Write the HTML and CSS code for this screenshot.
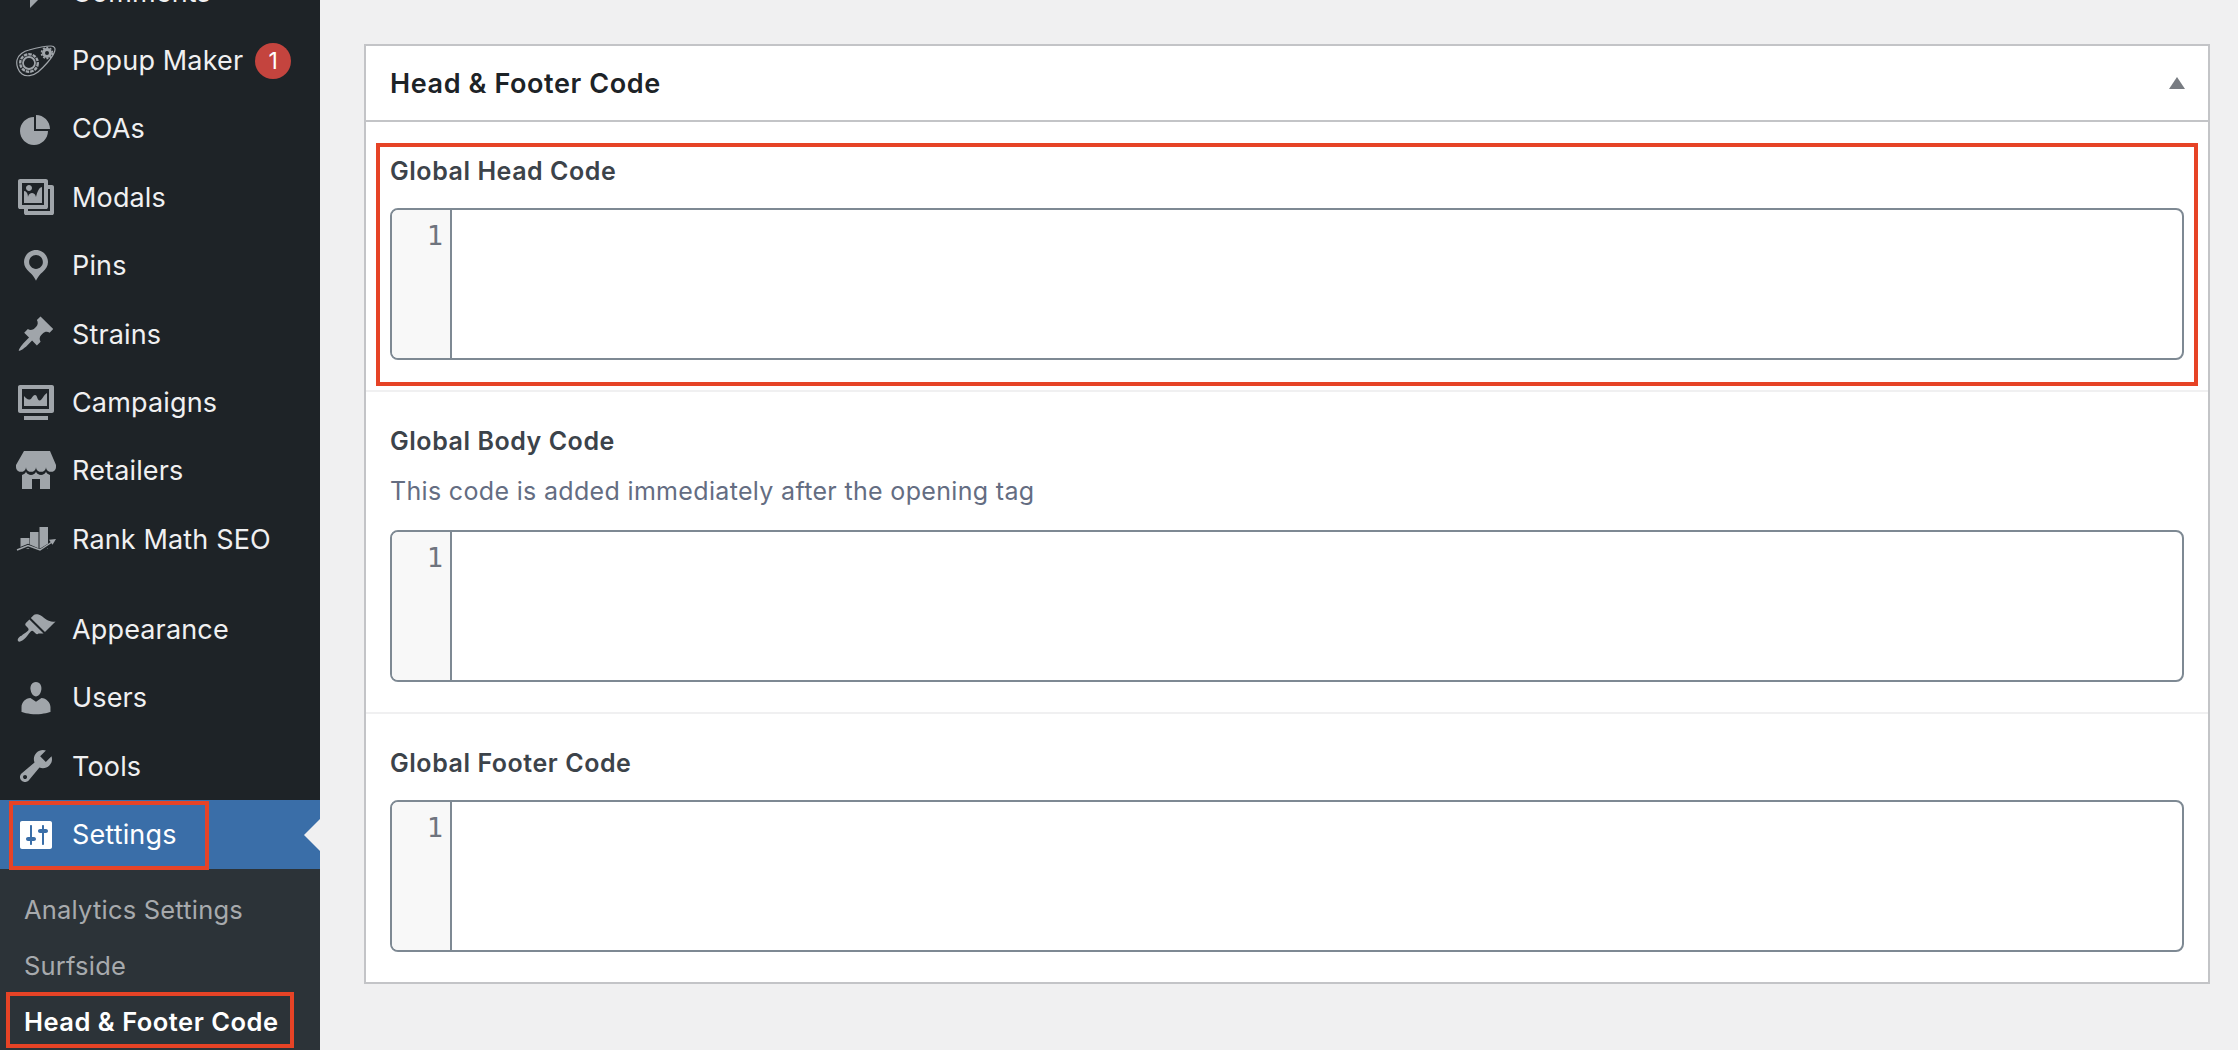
FILE: index.html
```html
<!DOCTYPE html>
<html lang="en">
<head>
<meta charset="utf-8">
<title>Head &amp; Footer Code</title>
<link rel="stylesheet" href="styles.css">
</head>
<body>
<div class="layout">
  <nav class="sidebar">
    <ul class="menu">
      <li class="item"><svg class="icon" viewBox="0 0 20 20"><path d="M5 2h9c1.1 0 2 .9 2 2v7c0 1.1-.9 2-2 2h-2l-5 5v-5H5c-1.1 0-2-.9-2-2V4c0-1.1.9-2 2-2z"/></svg><span>Comments</span></li>
      <li class="item"><svg class="icon" viewBox="0 0 40 40"><g fill="none" stroke="#a0a5aa"><path stroke-width="1.200" d="M1 19C2 14 8 10 13 9C20 7 30 5 35 5C39 5 40 8 38 12C36 17 28 26 22 31C17 35 10 36 6 33C2 30 0 24 1 19Z"/><circle cx="13" cy="22" r="6" stroke-width="1.800"/><circle cx="13" cy="22" r="8.800" stroke-width="2.400" stroke-dasharray="3.500 1"/></g><circle cx="31" cy="12" r="3.500" fill="none" stroke="#a0a5aa" stroke-width="3"/><circle cx="31" cy="12" r="5.500" fill="none" stroke="#a0a5aa" stroke-width="1.600" stroke-dasharray="2 1.500"/></svg><span>Popup Maker</span><span class="badge">1</span></li>
      <li class="item"><svg class="icon" viewBox="0 0 20 20"><path d="M10 10V3c3.870 0 7 3.130 7 7h-7zM9 4v7h7c0 3.870-3.130 7-7 7s-7-3.130-7-7 3.130-7 7-7z"/></svg><span>COAs</span></li>
      <li class="item"><svg class="icon" viewBox="0 0 20 20"><path d="M16 4h1.960c.57 0 1.040.47 1.040 1.040v12.920c0 .57-.47 1.040-1.040 1.040H5.040C4.470 19 4 18.530 4 17.960V16H2.040C1.470 16 1 15.530 1 14.960V2.040C1 1.470 1.470 1 2.040 1h12.920c.57 0 1.040.47 1.040 1.040V4zM3 14h11V3H3v11zm5-8.500C8 4.670 7.330 4 6.500 4S5 4.670 5 5.500 5.670 7 6.500 7 8 6.330 8 5.500zm2 4.500s1-5 3-5v8H4V7c2 0 2 3 2 3s.33-2 2-2 2 2 2 2zm7 7V6h-1v8.960c0 .57-.47 1.040-1.040 1.040H6v1h11z"/></svg><span>Modals</span></li>
      <li class="item"><svg class="icon" viewBox="0 0 20 20"><path d="M10 2C6.690 2 4 4.690 4 8c0 2.020 1.170 3.710 2.530 4.890.43.37 1.180.96 1.850 1.830.74.980 1.410 2.090 1.620 2.640.21-.55.880-1.660 1.620-2.640.67-.87 1.420-1.460 1.850-1.830C14.830 11.710 16 10.020 16 8c0-3.310-2.690-6-6-6zm0 2.560c1.900 0 3.440 1.540 3.440 3.440S11.900 11.440 10 11.440 6.560 9.900 6.560 8 8.100 4.560 10 4.560z"/></svg><span>Pins</span></li>
      <li class="item"><svg class="icon" viewBox="0 0 20 20"><path d="M10.440 3.020l1.820-1.820 6.360 6.350-1.830 1.820c-1.050-.68-2.480-.57-3.410.36l-.75.75c-.92.93-1.040 2.350-.35 3.410l-1.830 1.820-2.410-2.410-2.800 2.790c-.42.42-3.380 2.710-3.800 2.290s1.860-3.390 2.280-3.810l2.790-2.790L4.100 9.360l1.830-1.820c1.050.69 2.480.57 3.400-.36l.75-.75c.93-.92 1.050-2.350.36-3.410z"/></svg><span>Strains</span></li>
      <li class="item"><svg class="icon" viewBox="0 0 20 20"><path fill-rule="evenodd" d="M2 1h16c.55 0 1 .45 1 1v12c0 .55-.45 1-1 1H2c-.55 0-1-.45-1-1V2c0-.55.45-1 1-1zm1 2v10h13.500V3z"/><path d="M4 11.500V6.500c1 1 1.600 1.800 2.500 1.800C8 8.300 8.200 6 9.500 6s1 2.700 2.300 2.700c1.400 0 1.800-2.700 3.700-3.700v6.500zM4 16.500h12v2H4z"/></svg><span>Campaigns</span></li>
      <li class="item"><svg class="icon" viewBox="0 0 20 20"><path d="M1 10c.41.29.96.43 1.500.43.55 0 1.090-.14 1.500-.43.62-.46 1-1.170 1-2 0 .83.37 1.540 1 2 .41.29.96.43 1.500.43.55 0 1.090-.14 1.500-.43.62-.46 1-1.170 1-2 0 .83.37 1.540 1 2 .41.29.96.43 1.510.43.54 0 1.080-.14 1.490-.43.62-.46 1-1.170 1-2 0 .83.37 1.540 1 2 .41.29.96.43 1.500.43.55 0 1.090-.14 1.500-.43.63-.46 1-1.170 1-2V7l-3-7H4L0 7v1c0 .83.37 1.540 1 2zm2 8.990h5v-5h4v5h5v-7c-.37-.05-.72-.22-1-.43-.63-.45-1-.73-1-1.560 0 .83-.38 1.110-1 1.560-.41.3-.95.43-1.490.44-.55 0-1.100-.14-1.510-.44-.63-.45-1-.73-1-1.560 0 .83-.38 1.110-1 1.560-.41.3-.95.43-1.500.44-.54 0-1.090-.14-1.500-.44-.63-.45-1-.73-1-1.570 0 .84-.38 1.120-1 1.570-.29.21-.63.38-1 .44v6.990z"/></svg><span>Retailers</span></li>
      <li class="item item-last"><svg class="icon" viewBox="0 0 40 40"><path d="M4.500 19H13.500V30H4.500zM14 13H22.500V30H14zM23.500 8H32V30H23.500z"/><path fill="none" stroke="#1e2327" stroke-width="4" d="M0 32L12 27L24 32L40 22V40H0z"/><path fill="none" stroke="#a0a5aa" stroke-width="1.500" d="M1 31L12 26.500L24 31L36 23"/><path d="M40 20l-7 .800 3.500 5z"/></svg><span>Rank Math SEO</span></li>
      <li class="item"><svg class="icon" viewBox="0 0 20 20"><path d="M14.480 11.060L7.410 3.990l1.500-1.500c.5-.56 2.300-.47 3.510.32 1.210.8 1.430 1.280 2.910 2.100 1.180.64 2.450 1.260 4.450.85zm-.71.71L6.700 4.700 4.930 6.470c-.39.39-.39 1.020 0 1.410l1.060 1.060c.39.39.39 1.030 0 1.420-.6.6-1.430 1.110-2.210 1.690-.35.26-.7.53-1.010.84C1.430 13.230.4 14.910 1.100 15.600c.7.7 2.380-.33 3.720-1.670.31-.31.58-.66.84-1.010.58-.78 1.090-1.610 1.690-2.210.39-.39 1.030-.39 1.420 0l1.060 1.060c.39.39 1.020.39 1.410 0z"/></svg><span>Appearance</span></li>
      <li class="item"><svg class="icon" viewBox="0 0 20 20"><path d="M10 9.250c-2.270 0-2.730-3.440-2.730-3.440C7 4.020 7.820 2 9.970 2c2.160 0 2.980 2.020 2.710 3.810 0 0-.41 3.440-2.680 3.440zm0 2.570L12.720 10c2.390 0 4.520 2.330 4.520 4.530v2.490s-3.650 1.130-7.240 1.130c-3.650 0-7.240-1.130-7.240-1.130v-2.490c0-2.250 1.940-4.480 4.470-4.480z"/></svg><span>Users</span></li>
      <li class="item"><svg class="icon" viewBox="0 0 20 20"><path d="M16.680 9.770c-1.340 1.340-3.300 1.670-4.950.99l-5.410 6.520c-.99.99-2.590.99-3.580 0s-.99-2.590 0-3.570l6.520-5.420c-.68-1.650-.35-3.610.99-4.950 1.280-1.280 3.120-1.620 4.720-1.060l-2.890 2.890 2.820 2.820 2.860-2.870c.53 1.580.18 3.390-1.080 4.650zM3.810 16.210c.4.39 1.040.39 1.430 0 .4-.4.4-1.040 0-1.430-.39-.4-1.030-.4-1.430 0-.39.39-.39 1.030 0 1.430z"/></svg><span>Tools</span></li>
      <li class="item item-current"><svg class="icon" viewBox="0 0 20 20"><path d="M18 16V4c0-.55-.45-1-1-1H3c-.55 0-1 .45-1 1v12c0 .55.45 1 1 1h14c.55 0 1-.45 1-1zM8 11h1c.55 0 1 .45 1 1s-.45 1-1 1H8v1.500c0 .28-.22.5-.5.5s-.5-.22-.5-.5V13H6c-.55 0-1-.45-1-1s.45-1 1-1h1V5.500c0-.28.22-.5.5-.5s.5.22.5.5V11zm5-2h-1c-.55 0-1-.45-1-1s.45-1 1-1h1V5.500c0-.28.22-.5.5-.5s.5.22.5.5V7h1c.55 0 1 .45 1 1s-.45 1-1 1h-1v5.500c0 .28-.22.5-.5.5s-.5-.22-.5-.5V9z"/></svg><span>Settings</span><span class="mark mark-settings"></span></li>
    </ul>
    <ul class="submenu">
      <li class="subitem">Analytics Settings</li>
      <li class="subitem">Surfside</li>
      <li class="subitem subitem-current">Head &amp; Footer Code<span class="mark mark-sub"></span></li>
    </ul>
  </nav>
  <main class="content">
    <section class="panel">
      <header class="panel-head">
        <h2 class="panel-title">Head &amp; Footer Code</h2>
        <span class="toggle"></span>
      </header>
      <div class="field">
        <span class="mark mark-field"></span>
        <h3 class="field-label">Global Head Code</h3>
        <div class="editor"><div class="gutter">1</div><div class="code"></div></div>
      </div>
      <div class="field">
        <h3 class="field-label">Global Body Code</h3>
        <p class="field-desc">This code is added immediately after the opening tag</p>
        <div class="editor"><div class="gutter">1</div><div class="code"></div></div>
      </div>
      <div class="field">
        <h3 class="field-label">Global Footer Code</h3>
        <div class="editor"><div class="gutter">1</div><div class="code"></div></div>
      </div>
    </section>
  </main>
</div>
</body>
</html>
```
FILE: styles.css
```css
* { box-sizing: border-box; }
html, body { margin: 0; height: 100%; overflow: hidden; }
body { background: #f0f0f1; font-family: Inter, "Liberation Sans", sans-serif; color: #3c434a; }
ul { list-style: none; margin: 0; padding: 0; }
.layout { display: flex; height: 1050px; overflow: hidden; }

.sidebar { width: 320px; flex: none; height: 1050px; background: #1e2327; overflow: hidden; }
.menu { margin-top: -42px; }
.item { position: relative; display: flex; align-items: center; height: 68.4px; padding-left: 16px; color: #f0f0f1; font-size: 27px; letter-spacing: 0.15px; white-space: nowrap; }
.item-last { margin-bottom: 21.8px; }
.icon { width: 40px; height: 40px; flex: none; margin-right: 16px; fill: #a0a5aa; }
.badge { display: flex; align-items: center; justify-content: center; width: 36px; height: 36px; margin-left: 12px; border-radius: 50%; background: #c4443e; color: #fff; font-size: 23px; letter-spacing: 0; }
.item-current { background: #3a6ea8; color: #fff; }
.item-current .icon { fill: #fff; }
.item-current::after { content: ""; position: absolute; right: 0; top: 50%; margin-top: -16px; border: 16px solid transparent; border-left: 0; border-right-color: #f0f0f1; }
.submenu { background: #2c3338; height: 181px; padding-top: 13px; }
.subitem { position: relative; display: flex; align-items: center; height: 56px; padding-left: 24px; color: #a7aaad; font-size: 25.5px; letter-spacing: 0.2px; white-space: nowrap; }
.subitem-current { color: #fff; font-weight: 600; letter-spacing: 0.5px; }

.mark { position: absolute; border: 4px solid #e64326; pointer-events: none; }
.mark-settings { left: 9px; top: 1px; width: 200px; height: 69px; }
.mark-sub { left: 6px; top: -2px; width: 288px; height: 56px; }
.mark-field { left: 10px; top: 21px; right: 10px; height: 243px; }

.content { flex: 1; min-width: 0; padding: 44px 28px 0 44px; }
.panel { background: #fff; border: 2px solid #c3c4c7; }
.panel-head { display: flex; align-items: center; justify-content: space-between; height: 76px; padding: 0 23px 0 24px; border-bottom: 2px solid #c3c4c7; }
.panel-title { margin: 0; font-size: 27px; letter-spacing: 0.6px; font-weight: 600; color: #1d2327; }
.toggle { width: 0; height: 0; border-left: 8px solid transparent; border-right: 8px solid transparent; border-bottom: 12px solid #787c82; }

.field { position: relative; padding: 31px 24px 30px; border-bottom: 2px solid #f0f0f1; }
.field:last-child { border-bottom: 0; }
.field-label { margin: 0 0 19px; font-size: 25px; letter-spacing: 0.55px; line-height: 36px; font-weight: 600; color: #3c434a; }
.field-desc { margin: -5px 0 21px; font-size: 25px; letter-spacing: 0.33px; line-height: 36px; color: #646d82; }
.editor { display: flex; height: 152px; border: 2px solid #7e8993; border-radius: 8px; overflow: hidden; background: #fff; }
.gutter { width: 60px; flex: none; padding: 11px 7px 0 0; background: #f8f8f8; border-right: 2px solid #7e8993; color: #6f747e; font-family: "DejaVu Sans Mono", monospace; font-size: 27px; line-height: 30px; text-align: right; }
.code { flex: 1; }
```
